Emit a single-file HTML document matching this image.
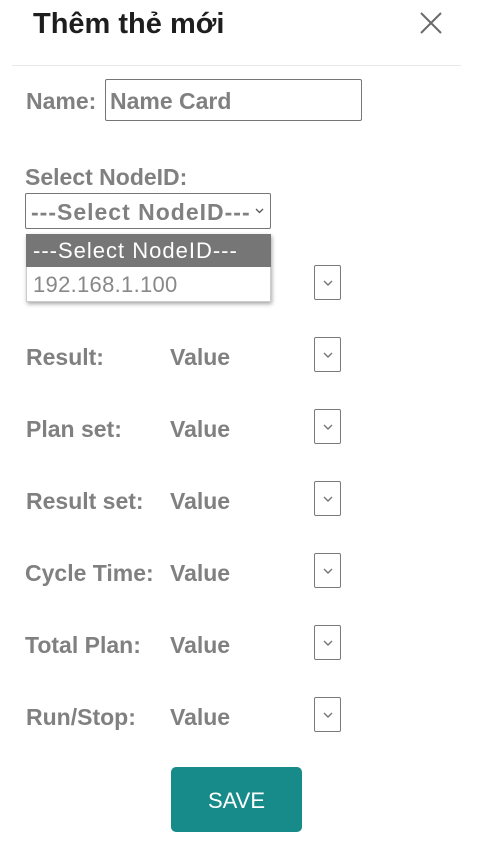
<!DOCTYPE html>
<html><head><meta charset="utf-8">
<style>
*{margin:0;padding:0;box-sizing:border-box}
body{width:477px;height:845px;background:#fff;position:relative;overflow:hidden;font-family:"Liberation Sans",Arial,sans-serif}
.a{position:absolute;white-space:nowrap}
.title{left:33px;top:7px;font-size:29px;font-weight:bold;color:#1e1e1e;line-height:34px}
.lbl{font-size:23px;font-weight:bold;color:#808080;line-height:26px}
.sel{position:absolute;left:314px;width:27px;height:35px;border:1px solid #7a7a7a;border-radius:2px;background:#fff}
.sel svg{position:absolute;left:8px;top:14px}
</style></head><body>
<div class="a title">Thêm thẻ mới</div>
<svg class="a" style="left:420px;top:12px" width="22" height="22" viewBox="0 0 22 22"><path d="M1 1L21 21M21 1L1 21" stroke="#6a6a6a" stroke-width="2" fill="none"/></svg>
<div class="a" style="left:12px;top:65px;width:449px;height:1px;background:#e8e8e8"></div>

<div class="a lbl" style="left:26px;top:88px">Name:</div>
<div class="a" style="left:105px;top:79px;width:257px;height:42px;border:1px solid #767676;border-radius:2px"></div>
<div class="a lbl" style="left:110px;top:88px">Name Card</div>

<div class="a lbl" style="left:25px;top:164px">Select NodeID:</div>
<div class="a" style="left:25px;top:193px;width:246px;height:36px;border:1px solid #767676;border-radius:2px"></div>
<div class="a lbl" style="left:31px;top:199px;letter-spacing:1px">---Select NodeID---</div>
<svg class="a" style="left:255px;top:208px" width="9" height="6" viewBox="0 0 9 6"><path d="M1 1L4.5 4.5L8 1" stroke="#555" stroke-width="1.3" fill="none"/></svg>

<div class="sel" style="top:265px"><svg width="10" height="6" viewBox="0 0 10 6"><path d="M1 1L5 5L9 1" stroke="#777" stroke-width="1.4" fill="none"/></svg></div>

<div class="a" style="left:26px;top:234px;width:245px;height:68px;background:#fff;box-shadow:1px 2px 4px rgba(0,0,0,.35);border:1px solid #ccc"></div>
<div class="a" style="left:26px;top:234px;width:245px;height:33px;background:#767676"></div>
<div class="a" style="left:33px;top:238px;font-size:22px;color:#fff;line-height:26px;letter-spacing:1px">---Select NodeID---</div>
<div class="a" style="left:33px;top:272px;font-size:22px;color:#888;line-height:26px;letter-spacing:0.3px">192.168.1.100</div>

<div class="a lbl" style="left:26px;top:344px">Result:</div><div class="a lbl" style="left:170px;top:344px">Value</div>
<div class="sel" style="top:337px"><svg width="10" height="6" viewBox="0 0 10 6"><path d="M1 1L5 5L9 1" stroke="#777" stroke-width="1.4" fill="none"/></svg></div>

<div class="a lbl" style="left:26px;top:416px">Plan set:</div><div class="a lbl" style="left:170px;top:416px">Value</div>
<div class="sel" style="top:409px"><svg width="10" height="6" viewBox="0 0 10 6"><path d="M1 1L5 5L9 1" stroke="#777" stroke-width="1.4" fill="none"/></svg></div>

<div class="a lbl" style="left:26px;top:488px">Result set:</div><div class="a lbl" style="left:170px;top:488px">Value</div>
<div class="sel" style="top:481px"><svg width="10" height="6" viewBox="0 0 10 6"><path d="M1 1L5 5L9 1" stroke="#777" stroke-width="1.4" fill="none"/></svg></div>

<div class="a lbl" style="left:25px;top:560px">Cycle Time:</div><div class="a lbl" style="left:170px;top:560px">Value</div>
<div class="sel" style="top:553px"><svg width="10" height="6" viewBox="0 0 10 6"><path d="M1 1L5 5L9 1" stroke="#777" stroke-width="1.4" fill="none"/></svg></div>

<div class="a lbl" style="left:25px;top:632px">Total Plan:</div><div class="a lbl" style="left:170px;top:632px">Value</div>
<div class="sel" style="top:625px"><svg width="10" height="6" viewBox="0 0 10 6"><path d="M1 1L5 5L9 1" stroke="#777" stroke-width="1.4" fill="none"/></svg></div>

<div class="a lbl" style="left:26px;top:704px">Run/Stop:</div><div class="a lbl" style="left:170px;top:704px">Value</div>
<div class="sel" style="top:697px"><svg width="10" height="6" viewBox="0 0 10 6"><path d="M1 1L5 5L9 1" stroke="#777" stroke-width="1.4" fill="none"/></svg></div>

<div class="a" style="left:171px;top:767px;width:131px;height:65px;background:#178a8a;border-radius:5px;color:#fff;font-size:22px;line-height:68px;text-align:center">SAVE</div>
</body></html>
